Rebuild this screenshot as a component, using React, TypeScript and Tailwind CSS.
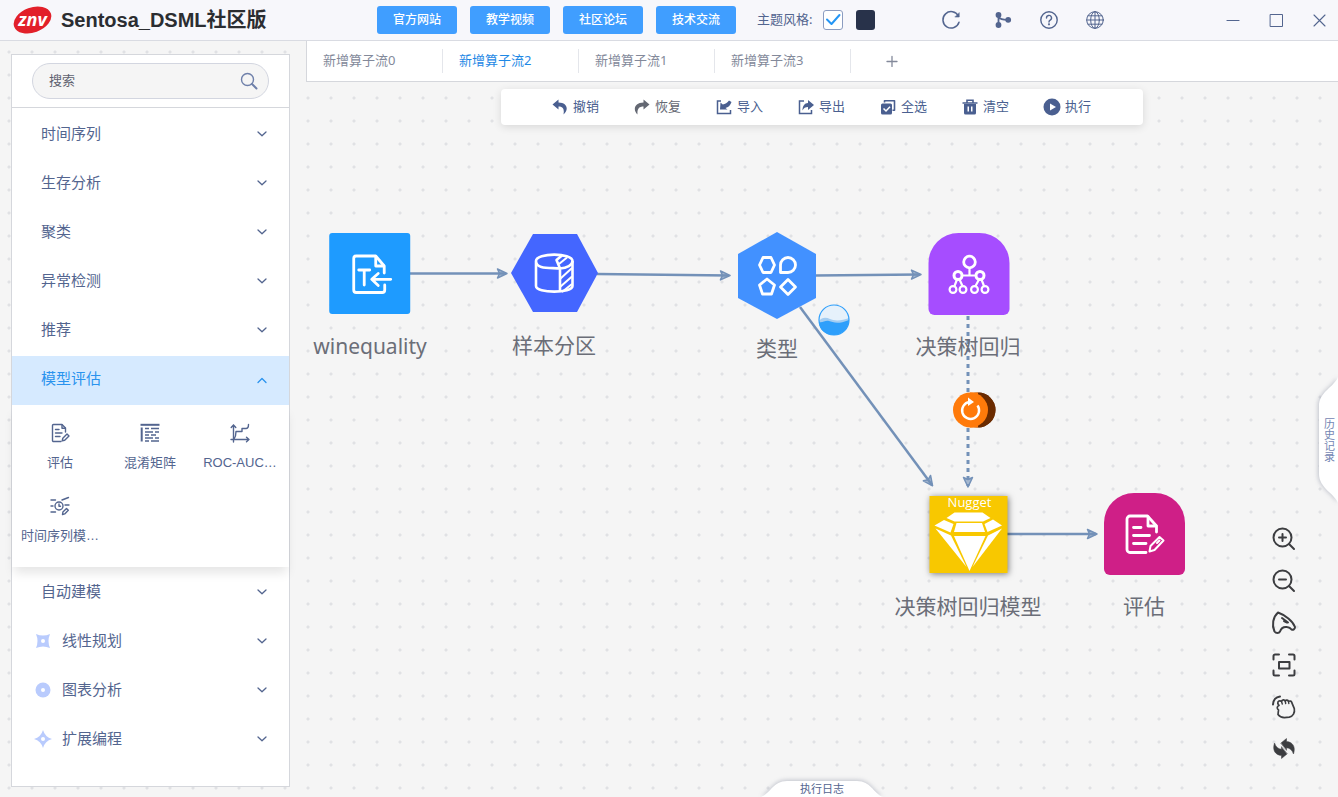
import { useState } from "react";
import type { ReactNode } from "react";

const stroke = {
  fill: "none",
  stroke: "currentColor",
  strokeLinecap: "round",
  strokeLinejoin: "round",
} as const;

const siteLinks = ["官方网站", "教学视频", "社区论坛", "技术交流"];
const tabs = ["新增算子流0", "新增算子流2", "新增算子流1", "新增算子流3"];

function Logo() {
  return (
    <svg className="h-[30px] w-[40px]" viewBox="0 0 40 30">
      <ellipse cx="19.5" cy="15" rx="19.5" ry="12.5" transform="rotate(-20 19.5 15)" fill="#e2202a" />
      <text x="19.5" y="20.5" textAnchor="middle" fill="#fff" fontSize="18" fontWeight="700" fontStyle="italic" fontFamily="Open Sans, sans-serif">
        znv
      </text>
    </svg>
  );
}

function Chevron({ up }: { up?: boolean }) {
  return (
    <svg className="w-3 h-3" viewBox="0 0 12 12" strokeWidth="1.3" {...stroke}>
      <path d={up ? "M2 9.5l4-4 4 4" : "M2 4L6 7.800 10 4"} />
    </svg>
  );
}

/* ---------- header ---------- */

function Header() {
  const [light, setLight] = useState(true);

  return (
    <header className="h-[41px] shrink-0 flex items-center bg-[#f7f7fb] border-b border-[#d9dbe2] text-[#53658f]">
      <div className="w-[377px] shrink-0 flex items-center pl-[13px] gap-2">
        <Logo />
        <h1 className="text-[20px] leading-6 font-bold text-[#2b2d31] font-[family-name:'Liberation_Sans','Noto_Sans_CJK_SC',sans-serif]">
          Sentosa_DSML社区版
        </h1>
      </div>

      <nav className="flex gap-[13px]">
        {siteLinks.map((label) => (
          <button key={label} className="w-20 h-7 rounded-[3px] bg-[#409eff] text-white text-xs font-medium">
            {label}
          </button>
        ))}
      </nav>

      <div className="ml-[21px] flex items-center text-[13px]">
        <label htmlFor="theme-light">主题风格:</label>
        <span className="relative ml-[11px] w-5 h-5">
          <input
            id="theme-light"
            type="checkbox"
            checked={light}
            onChange={() => setLight(!light)}
            className="block appearance-none w-5 h-5 rounded-[3px] border border-[#8b9cc0] bg-white"
          />
          {light && (
            <svg className="absolute inset-0 w-5 h-5 text-[#2496f5] pointer-events-none" viewBox="0 0 20 20" strokeWidth="2" {...stroke}>
              <path d="M4 9.5l4.5 4.5L16.5 5" />
            </svg>
          )}
        </span>
        <button aria-label="深色主题" className="ml-[13px] w-[19px] h-5 rounded-[3px] bg-[#28324a]" />
      </div>

      <div className="ml-[66px] flex items-center gap-[26px]">
        <button aria-label="刷新">
          <svg className="w-5 h-5" viewBox="0 0 20 20" strokeWidth="1.5" {...stroke}>
            <path d="M18 12.2A8.2 8.2 0 1 1 17.4 6" />
            <path d="M18.2 3v4h-4z" fill="currentColor" strokeWidth="0.6" />
          </svg>
        </button>
        <button aria-label="分支" className="ml-[6px]">
          <svg className="w-5 h-5" viewBox="0 0 20 20" fill="currentColor">
            <circle cx="5.5" cy="5" r="2.9" />
            <circle cx="5.5" cy="15" r="2.9" />
            <circle cx="15.2" cy="9.8" r="2.9" />
            <path d="M5.5 5v10M5.5 6c1.2 3.4 4 3.8 9.5 3.8" fill="none" stroke="currentColor" strokeWidth="1.8" />
          </svg>
        </button>
        <button aria-label="帮助">
          <svg className="w-5 h-5" viewBox="0 0 20 20" strokeWidth="1.4" {...stroke}>
            <circle cx="10" cy="10" r="8.2" />
            <path d="M7.5 8a2.5 2.5 0 1 1 3.7 2.1c-.8.5-1.2.9-1.2 1.9" />
            <circle cx="10" cy="14.3" r="0.4" fill="currentColor" />
          </svg>
        </button>
        <button aria-label="语言">
          <svg className="w-5 h-5" viewBox="0 0 20 20" strokeWidth="1" {...stroke}>
            <circle cx="10" cy="10" r="8.3" />
            <ellipse cx="10" cy="10" rx="4.3" ry="8.3" />
            <path d="M10 1.7v16.6M1.7 10h16.6M3 5.8h14M3 14.2h14" />
          </svg>
        </button>
      </div>

      <div className="ml-auto mr-3 flex items-center gap-[29px]">
        <button aria-label="最小化">
          <svg className="w-[14px] h-[14px]" viewBox="0 0 14 14" strokeWidth="1.2" {...stroke}>
            <path d="M1 7.5h12" />
          </svg>
        </button>
        <button aria-label="最大化">
          <svg className="w-[14px] h-[14px]" viewBox="0 0 14 14" strokeWidth="1" {...stroke}>
            <rect x="1.5" y="1.5" width="12" height="12" />
          </svg>
        </button>
        <button aria-label="关闭">
          <svg className="w-[14px] h-[14px]" viewBox="0 0 14 14" strokeWidth="1.1" {...stroke}>
            <path d="M2 2l11 11M13 2L2 13" />
          </svg>
        </button>
      </div>
    </header>
  );
}

/* ---------- sidebar ---------- */

const operators: { label: string; icon: ReactNode }[] = [
  {
    label: "评估",
    icon: (
      <>
        <path d="M11 18.5H3.5a1 1 0 0 1-1-1v-15a1 1 0 0 1 1-1H12L15.500 5V9" />
        <path d="M12 1.800V5.200H15.300M5.500 6.500H9M5.500 10H12M5.500 13.500H10" />
        <path d="M12.200 17.800l.6-2.600 4.200-4.200 2 2-4.300 4.300z" />
      </>
    ),
  },
  {
    label: "混淆矩阵",
    icon: (
      <>
        <path d="M0.500 1.800H19.500" strokeWidth="2" strokeLinecap="butt" />
        <path d="M1.700 4.500V18.500" strokeWidth="2" strokeLinecap="butt" />
        <path d="M5 5.500H9M11 5.500H19M5 9H13M15 9H19M5 12H9M11 12H16M5 15H13M15 15H19M5 18H9M11 18H19" strokeLinecap="butt" />
      </>
    ),
  },
  {
    label: "ROC-AUC…",
    icon: (
      <>
        <path d="M3.500 19V2M1.200 4.500L3.500 2l2.300 2.500M1 16.500H19M16.500 14.200l2.500 2.300-2.500 2.300" />
        <path d="M4 16c1.500-2 2-4 2-7.500H12V5.500H16c2 0 2.500-1.500 2.500-4" />
      </>
    ),
  },
  {
    label: "时间序列模…",
    icon: (
      <>
        <circle cx="9" cy="10" r="4" />
        <path d="M9 8v2.200h1.500M1 4H5.500M1 10H3M1 16H5.500M12 4L18.500 1.500M15 9H19" />
        <path d="M12.500 18.500l.4-2.500 3.600-3.500 1.800 1.800-3.600 3.600z" />
      </>
    ),
  },
];

function GroupRow({ label, icon, open }: { label: string; icon?: ReactNode; open?: boolean }) {
  return (
    <button
      className={`w-full h-[49px] pb-1 pr-[21px] flex items-center text-[15px] ${icon ? "pl-[22px]" : "pl-[29px]"} ${
        open ? "bg-[#d6eaff] text-[#2a93ee]" : "text-[#53658f]"
      }`}
    >
      {icon && (
        <svg className="w-[18px] h-[18px] mr-[10px]" viewBox="0 0 18 18" fill="#b9cbfd">
          {icon}
          <circle cx="9" cy="9" r="2" fill="#fff" />
        </svg>
      )}
      <span>{label}</span>
      <span className="ml-auto">
        <Chevron up={open} />
      </span>
    </button>
  );
}

function Sidebar() {
  return (
    <aside className="w-[279px] shrink-0 ml-[11px] mt-[13px] mb-[10px] bg-white border border-[#d5d7dc]">
      <div className="px-5 py-2 border-b border-[#d5d7dc]">
        <div className="h-9 flex items-center pl-4 pr-[10px] rounded-full border border-[#d3d6e0] bg-[#f5f5f5]">
          <input
            type="text"
            aria-label="搜索"
            placeholder="搜索"
            className="flex-1 min-w-0 bg-transparent outline-none text-[13px] text-[#555] placeholder:text-[#5f6270]"
          />
          <svg className="w-[18px] h-[18px] text-[#6f80aa]" viewBox="0 0 18 18" strokeWidth="1.4" {...stroke}>
            <circle cx="7.500" cy="7.500" r="6" />
            <path d="M12 12l4.500 4.500" strokeWidth="2" />
          </svg>
        </div>
      </div>

      <div className="pt-[3px]">
        {["时间序列", "生存分析", "聚类", "异常检测", "推荐"].map((label) => (
          <GroupRow key={label} label={label} />
        ))}
        <GroupRow label="模型评估" open />

        <div className="mb-[2px] grid grid-cols-3 gap-y-[23px] pl-[3px] pr-1 pt-[18px] pb-[21px] shadow-[0_8px_10px_-2px_rgba(0,0,0,0.1)]">
          {operators.map((op) => (
            <button
              key={op.label}
              className="h-[50px] flex flex-col items-center justify-between text-[13px] leading-5 text-[#53658f] whitespace-nowrap font-[family-name:'Liberation_Sans','Noto_Sans_CJK_SC',sans-serif]"
            >
              <svg className="w-5 h-5" viewBox="0 0 20 20" strokeWidth="1.4" {...stroke}>
                {op.icon}
              </svg>
              <span>{op.label}</span>
            </button>
          ))}
        </div>

        <GroupRow label="自动建模" />
        <GroupRow label="线性规划" icon={<path d="M2 2q7 3 14 0q-3 7 0 14q-7-3-14 0q3-7 0-14z" />} />
        <GroupRow label="图表分析" icon={<circle cx="9" cy="9" r="7.500" />} />
        <GroupRow label="扩展编程" icon={<path d="M9 0q2 7 9 9q-7 2-9 9q-2-7-9-9q7-2 9-9z" />} />
      </div>
    </aside>
  );
}

/* ---------- canvas ---------- */

const tools: { label: string; icon: ReactNode; muted?: boolean }[] = [
  {
    label: "撤销",
    icon: (
      <svg className="w-4 h-4" viewBox="0 0 16 16" fill="currentColor">
        <path d="M6.500 .5L.5 5.500l6 5V7.500C11 7.500 12.500 10 11.500 15.500 17 11 15.500 3.500 6.500 3.500z" />
      </svg>
    ),
  },
  {
    label: "恢复",
    muted: true,
    icon: (
      <svg className="w-4 h-4" viewBox="0 0 16 16" fill="currentColor">
        <path d="M9.500 .5l6 5-6 5V7.500C5 7.500 3 10 3.500 15.500-1.500 11 .5 3.500 9.500 3.500z" />
      </svg>
    ),
  },
  {
    label: "导入",
    icon: (
      <svg className="w-4 h-4" viewBox="0 0 16 16" fill="currentColor">
        <path d="M5 2H1.500v12.500h13V11" fill="none" stroke="currentColor" strokeWidth="1.500" />
        <path d="M4 10.500L4.500 3.500l2.300 2C9 5 11.500 4 13 1.500L15.500 3C14.500 6.500 12 8.500 9.500 9l2 1.500z" />
      </svg>
    ),
  },
  {
    label: "导出",
    icon: (
      <svg className="w-4 h-4" viewBox="0 0 16 16" fill="currentColor">
        <path d="M6 2H1.500v12.500h12V11" fill="none" stroke="currentColor" strokeWidth="1.500" />
        <path d="M10 1l6 5-6 5V8C7.500 8 5.500 9 4.500 11.500 4.500 7 6.500 4.200 10 4z" />
      </svg>
    ),
  },
  {
    label: "全选",
    icon: (
      <svg className="w-4 h-4" viewBox="0 0 16 16" fill="currentColor">
        <path d="M4.500 3.500V1.700h10v9.500h-2" fill="none" stroke="currentColor" strokeWidth="1.600" strokeLinejoin="round" />
        <rect x="1" y="4.500" width="11" height="11" rx="1.500" />
        <path d="M3.500 9.500l2.500 2.500 4-4.300" fill="none" stroke="#fff" strokeWidth="1.500" />
      </svg>
    ),
  },
  {
    label: "清空",
    icon: (
      <svg className="w-4 h-4" viewBox="0 0 16 16" fill="currentColor">
        <path d="M5 3.500V1.200h6v2.300M0.500 4h15" fill="none" stroke="currentColor" strokeWidth="1.600" />
        <path fillRule="evenodd" d="M2 5h12v9a1.500 1.500 0 0 1-1.500 1.500h-9A1.500 1.500 0 0 1 2 14zM5.500 7.500v5h1.500v-5zM9 7.500v5h1.500v-5z" />
      </svg>
    ),
  },
  {
    label: "执行",
    icon: (
      <svg className="w-4 h-4 overflow-visible" viewBox="0 0 16 16">
        <circle cx="8" cy="8" r="8.500" fill="currentColor" />
        <path d="M6 4.500v7L12 8z" fill="#fff" />
      </svg>
    ),
  },
];

type FlowNode = { id: string; label: string; x: number; y: number; shape: ReactNode };

const docOutline = "M58 43V36L49.500 26H30a2.500 2.500 0 0 0-2.500 2.500V60a2.500 2.500 0 0 0 2.500 2.500";

// x / y are the centre of the 88px symbol on the canvas
const nodes: FlowNode[] = [
  {
    id: "source",
    label: "winequality",
    x: 64,
    y: 192,
    shape: (
      <>
        <rect x="3" y="3" width="81" height="81" rx="3" fill="#1e9bff" />
        <g fill="none" stroke="#fff" strokeWidth="2.800" strokeLinecap="round" strokeLinejoin="round">
          <path d={docOutline + "H56a2.500 2.500 0 0 0 2.500-2.500V55"} />
          <path d="M49.500 27V36H57.500" />
          <path d="M32.500 40H43.500M38 40V55M64.500 49.300H46M52 43.500L45.500 49.300 52 55.500" />
        </g>
      </>
    ),
  },
  {
    id: "split",
    label: "样本分区",
    x: 248,
    y: 191,
    shape: (
      <>
        <path d="M1 44L23 5H67L88 44 67 83H23z" fill="#4466ff" />
        <g fill="none" stroke="#fff" strokeWidth="2.600" strokeLinejoin="round">
          <path d="M62.500 32C62.500 23.500 26 23.500 26 32S40 38.500 50 39.500M26 32V57C26 64.500 62.500 64.500 62.500 57V32" />
          <path d="M50 63V39.500L46.500 31 52 26.500M50 39.500C57 39 62.500 36 62.500 32" />
          <path d="M50 50L62 39M50 58L62 47.500M52 63L62 55M49 35L57 28.500" strokeWidth="2" />
        </g>
      </>
    ),
  },
  {
    id: "type",
    label: "类型",
    x: 471,
    y: 194,
    shape: (
      <>
        <path d="M44 0L83 22V66L44 87 5 66V22z" fill="#4291ff" />
        <g fill="none" stroke="#fff" strokeWidth="2.800" strokeLinejoin="round">
          <path d="M30 25.500H38L41.500 33 38 40.500H30L26.500 33z" />
          <path d="M47.500 40.500V33A7.500 7.500 0 1 1 55 40.500z" />
          <path d="M34 47L41.500 53 38.500 62H29.500L26.500 53z" />
          <path d="M55 47.500L62.500 55 55 62.500 47.500 55z" />
        </g>
      </>
    ),
  },
  {
    id: "tree",
    label: "决策树回归",
    x: 662,
    y: 192,
    shape: (
      <>
        <path d="M4 33A30 30 0 0 1 34 3H55A30 30 0 0 1 85 33V79a6 6 0 0 1-6 6H10a6 6 0 0 1-6-6z" fill="#a64dff" />
        <g fill="none" stroke="#fff" strokeWidth="2.200">
          <circle cx="45" cy="32" r="5.800" strokeWidth="2.800" />
          <circle cx="33.500" cy="45.500" r="4" strokeWidth="3" />
          <circle cx="55.500" cy="45.500" r="4" strokeWidth="3" />
          <circle cx="28.500" cy="59.500" r="3.400" />
          <circle cx="38.500" cy="59.500" r="3.400" />
          <circle cx="50" cy="59.500" r="3.400" />
          <circle cx="60.500" cy="59.500" r="3.400" />
          <path d="M45 38V45.500M37.500 45.500H51.500M32.500 49.500L30 56M35 49.500L38 56M54.500 49.500L51 56M57 49.500L59.500 56" />
        </g>
      </>
    ),
  },
  {
    id: "nugget",
    label: "决策树回归模型",
    x: 662,
    y: 452,
    shape: (
      <>
        <rect x="5" y="6" width="78" height="77" fill="#f8c800" className="drop-shadow-[1px_1px_3px_rgba(0,0,0,0.5)]" />
        <g fill="#fff">
          <text x="45" y="17" textAnchor="middle" fontSize="13" fontFamily="Open Sans, sans-serif">
            Nugget
          </text>
          <path d="M22 28L30 22.500H58L66 28 58.500 31.500H30z" />
          <path d="M19.500 30L29 34 26 42.500 10 35.500z" />
          <path d="M32 33H57.500L60.500 42H29.500z" />
          <path d="M68.500 29.500L77.500 35.500 63 42 60 34z" />
          <path d="M11 38.500L26.500 45.500 42 77z" />
          <path d="M29.500 46H61L45 81z" />
          <path d="M77.500 38.500L63.500 45.500 48 77z" />
        </g>
      </>
    ),
  },
  {
    id: "evaluate",
    label: "评估",
    x: 838,
    y: 452,
    shape: (
      <>
        <path d="M4 33A30 30 0 0 1 34 3H55A30 30 0 0 1 85 33V79a6 6 0 0 1-6 6H10a6 6 0 0 1-6-6z" fill="#cf1f87" />
        <g fill="none" stroke="#fff" strokeWidth="2.800" strokeLinecap="round" strokeLinejoin="round">
          <path d="M56.500 42V36L47.500 26H30a3 3 0 0 0-3 3V59.500a3 3 0 0 0 3 3H46" />
          <path d="M48 27V36H56M33.500 37.500H41M33.500 45.500H49.500M33.500 53.500H46" />
          <path d="M49.500 61.500L50.500 56 59.500 47 63.500 50.500 54.500 60zM57 53l2.500-2.500" strokeWidth="2" />
        </g>
      </>
    ),
  },
];

const edges = [
  { d: "M104 191.500H200" },
  { d: "M291 192L423 193.500" },
  { d: "M509 193.500L614 192.500" },
  { d: "M494 225L626 403" },
  { d: "M662 234V404", dashed: true },
  { d: "M701 452H790" },
];

function Edges() {
  return (
    <svg className="absolute inset-0 w-full h-full" fill="none" stroke="#7391b8" strokeWidth="2.500">
      <defs>
        <marker id="arrow" viewBox="0 0 12 12" refX="10" refY="6" markerWidth="12" markerHeight="12" markerUnits="userSpaceOnUse" orient="auto">
          <path d="M1.500 1.500L11 6 1.500 10.500 3.500 6z" fill="#7391b8" fillOpacity="0.600" stroke="#7391b8" strokeWidth="1.500" strokeLinejoin="round" />
        </marker>
      </defs>
      {edges.map((e) => (
        <path key={e.d} d={e.d} strokeDasharray={e.dashed ? "4 4" : undefined} strokeWidth={e.dashed ? 3 : undefined} markerEnd="url(#arrow)" />
      ))}
    </svg>
  );
}

const turnArrow = "M9 6L14.500 1.500V4.500C20.500 5 24 9.500 21.500 17 20 13 18 11 14.500 10.800V13z";

const viewTools: { label: string; icon: ReactNode }[] = [
  {
    label: "放大",
    icon: (
      <>
        <circle cx="10.500" cy="10.500" r="9" />
        <path d="M17 17l5 5M7 10.500h7M10.500 7v7" />
      </>
    ),
  },
  {
    label: "缩小",
    icon: (
      <>
        <circle cx="10.500" cy="10.500" r="9" />
        <path d="M17 17l5 5M7 10.500h7" />
      </>
    ),
  },
  {
    label: "指针",
    icon: (
      <>
        <path d="M6 1.500C1 6 -.5 14 2.500 20.500c1.500 2 4.500 2 5.500 0 1-3 3.500-5 7-4.500 2.500.3 3.500 1 4.500 2.500 1.500 1 3.500-.5 3.500-2.500C21 10 13 4 6 1.500z" />
        <path d="M10 7l6 4.500M12 10l3 1.500" />
      </>
    ),
  },
  {
    label: "适应画布",
    icon: (
      <>
        <path d="M1.500 6.500V3a1.500 1.500 0 0 1 1.500-1.500h4M17 1.500h4A1.500 1.500 0 0 1 22.500 3v3.500M22.500 17.500V21a1.500 1.500 0 0 1-1.500 1.500h-4M7 22.500H3A1.500 1.500 0 0 1 1.500 21v-3.500" />
        <rect x="7" y="9" width="10.500" height="6.500" />
      </>
    ),
  },
  {
    label: "拖动",
    icon: (
      <>
        <path d="M1 9.500C1.300 5 4 2 8 1.500" />
        <path d="M6.500 15c-2-1.500-1.500-4 .5-4.500L5.800 8.500C5.500 6 8 5 9.500 6.500 10 4.500 12.500 4.500 13.200 6c1-1.300 2.800-1 3.300.4 1.500-.9 3-.2 3.300 1.300l2.500 6c.8 4-1.300 7.800-5 8.500l-5 .5c-3-.2-5-1.500-6.300-3.200z" strokeWidth="1.700" />
        <path d="M9.500 6.500l.8 2.500M13.200 6l.5 2.500M16.500 6.500l.3 2" strokeWidth="1.400" />
      </>
    ),
  },
  {
    label: "重置",
    icon: (
      <g fill="currentColor" strokeWidth="0.500">
        <path d={turnArrow} />
        <path d={turnArrow} transform="rotate(180 12 11.500)" />
      </g>
    ),
  },
];

function Canvas() {
  return (
    <section className="relative flex-1">
      <Edges />

      {nodes.map((n) => (
        <div key={n.id} className="absolute -translate-x-1/2 -mt-11 flex flex-col items-center" style={{ left: n.x, top: n.y }}>
          <svg className="w-[88px] h-[88px] overflow-visible" viewBox="0 0 88 88">
            {n.shape}
          </svg>
          <span className="mt-[14px] text-[21px] leading-7 text-[#6b6e78] whitespace-nowrap">{n.label}</span>
        </div>
      ))}

      {/* running indicator */}
      <svg className="absolute left-[512px] top-[222px] w-8 h-8" viewBox="0 0 32 32">
        <circle cx="16" cy="16" r="15" fill="#e6f1fb" />
        <path d="M1 17C4 13 8 13 12 15s12 2 19-1c1 9-6 17-15 17S1 25 1 17z" fill="#a3cdf2" />
        <path d="M1 18c4 1 6-2 10-1s8 4 20-1c0 8-7 15-15 15S1 26 1 18z" fill="#2e9ffb" />
        <circle cx="16" cy="16" r="15" fill="none" stroke="#2e9ffb" strokeWidth="1.200" />
      </svg>

      {/* re-run switch on the dashed link */}
      <button aria-label="重新训练" className="absolute left-[646px] top-[310px]">
        <svg className="w-11 h-9" viewBox="0 0 44 36">
          <circle cx="26" cy="18" r="17.500" fill="#6b2b00" />
          <path d="M18 .5h8v35h-8z" fill="#ff7a0a" />
          <path d="M26 .500A17.500 17.500 0 0 1 26 35.500Q34 31 35.500 18 34 5 26 .500z" fill="#6b2b00" />
          <circle cx="18.500" cy="18" r="17.500" fill="#ff7a0a" />
          <path d="M25.500 13.500A8.500 8.500 0 1 1 17.500 10" fill="none" stroke="#fff" strokeWidth="2.400" />
          <path d="M16 5.500v8.500l6-4z" fill="#fff" />
        </svg>
      </button>

      <div className="relative mx-auto mt-[7px] w-fit h-9 px-[51px] pb-px flex items-center gap-[34px] rounded-[4px] bg-white shadow-[0_2px_8px_rgba(0,0,0,0.12)]">
        {tools.map((t) => (
          <button key={t.label} className={`flex items-center gap-1 text-[13px] ${t.muted ? "text-[#646873]" : "text-[#4a5f90]"}`}>
            {t.icon}
            <span className="w-7 whitespace-nowrap">{t.label}</span>
          </button>
        ))}
      </div>

      <div className="absolute right-[42px] bottom-9 flex flex-col gap-[18px] text-[#3c3d40]">
        {viewTools.map((v) => (
          <button key={v.label} aria-label={v.label}>
            <svg className="block w-6 h-6 overflow-visible" viewBox="0 0 24 24" strokeWidth="2" {...stroke}>
              {v.icon}
            </svg>
          </button>
        ))}
      </div>

      <button className="absolute right-0 top-1/2 -translate-y-1/2 w-5 h-[126px] pl-px flex items-center justify-center text-[11px] leading-4 text-[#7486b3]">
        <svg className="absolute inset-0 w-full h-full overflow-visible drop-shadow-[-1px_0_2px_rgba(70,80,110,0.3)]" viewBox="0 0 20 126">
          <path d="M20 0C17 9 1 15 1 29V97C1 111 17 117 20 126z" fill="#fff" />
        </svg>
        <span className="relative [writing-mode:vertical-rl]">历史记录</span>
      </button>

      <button className="absolute left-1/2 bottom-0 -translate-x-1/2 w-[122px] h-4 text-[11px] leading-4 text-[#53658f]">
        <svg className="absolute inset-0 w-full h-full overflow-visible drop-shadow-[0_-1px_2px_rgba(70,80,110,0.3)]" viewBox="0 0 122 16">
          <path d="M0 16C10 12 12 0 26 0H96C110 0 112 12 122 16z" fill="#fff" />
        </svg>
        <span className="relative block">执行日志</span>
      </button>
    </section>
  );
}

function TabBar() {
  const [active, setActive] = useState(1);

  return (
    <div className="h-[41px] flex items-center bg-white border-l border-b border-[#d5d7dc] text-[13px]">
      {tabs.map((label, i) => (
        <button
          key={label}
          onClick={() => setActive(i)}
          className={`w-[136px] h-6 pl-4 pb-px text-left border-r border-[#e4e6eb] ${active === i ? "text-[#1e88e5]" : "text-[#83899a]"}`}
        >
          {label}
        </button>
      ))}
      <button aria-label="新增" className="ml-[35px] text-[#83899a]">
        <svg className="w-3 h-3" viewBox="0 0 12 12" strokeWidth="1.300" {...stroke}>
          <path d="M1 6.500h10M6 1.500v10" />
        </svg>
      </button>
    </div>
  );
}

export default function App() {
  return (
    <div className="min-h-screen flex flex-col overflow-hidden font-[family-name:'Noto_Sans','Noto_Sans_CJK_SC',sans-serif]">
      <Header />
      <div className="flex-1 flex bg-[#f5f5f5] bg-[radial-gradient(circle_at_9px_11px,#e0e1e4_1px,transparent_2px)] bg-[size:23px_23px]">
        <Sidebar />
        <main className="flex-1 min-w-0 ml-4 flex flex-col">
          <TabBar />
          <Canvas />
        </main>
      </div>
    </div>
  );
}
